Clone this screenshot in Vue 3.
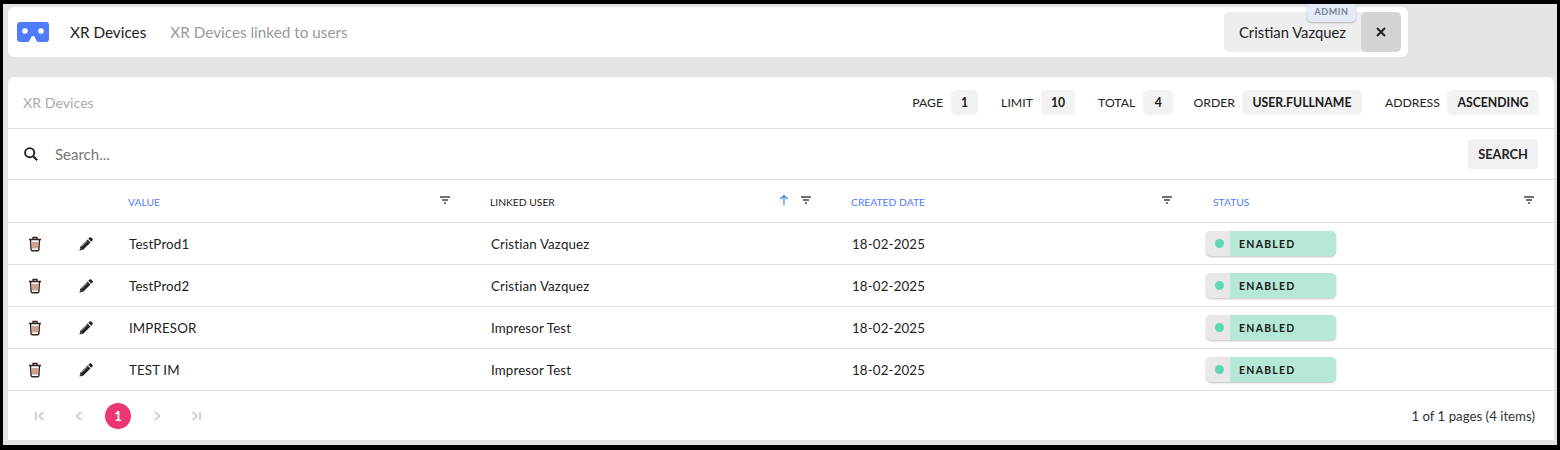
<template>
  <div class="page">
    <header class="topbar">
      <svg class="logo" viewBox="0 0 32 20" width="32" height="20">
        <path fill="#4f7cff" d="M3 0h26a3 3 0 0 1 3 3v14a3 3 0 0 1-3 3h-7.500a2 2 0 0 1-1.800-1.100l-2-4a2 2 0 0 0-3.400 0l-2 4a2 2 0 0 1-1.800 1.100H3a3 3 0 0 1-3-3V3a3 3 0 0 1 3-3z" />
        <circle cx="8" cy="9" r="2.800" fill="#fff" />
        <circle cx="24" cy="9" r="2.800" fill="#fff" />
      </svg>
      <span class="title">XR Devices</span>
      <span class="subtitle">XR Devices linked to users</span>
      <div class="user">
        <span class="role">ADMIN</span>
        <span class="user-name">Cristian Vazquez</span>
        <button class="close">
          <svg viewBox="0 0 12 12" width="12" height="12">
            <path d="M2 2l8 8M10 2l-8 8" stroke="#222" stroke-width="1.900" fill="none" />
          </svg>
        </button>
      </div>
    </header>

    <main class="card">
      <div class="card-head">
        <span class="card-title">XR Devices</span>
        <div class="meta">
          <div v-for="m in meta" :key="m.label" class="meta-item" :class="m.cls">
            <span class="meta-label">{{ m.label }}</span>
            <span class="meta-value">{{ m.value }}</span>
          </div>
        </div>
      </div>

      <div class="search">
        <svg class="search-icon" viewBox="0 0 16 16" width="16" height="16">
          <circle cx="6.700" cy="6.700" r="4.600" stroke="#222" stroke-width="1.900" fill="none" />
          <path d="M10.200 10.200l4 4" stroke="#222" stroke-width="2.100" fill="none" />
        </svg>
        <span class="search-text">Search...</span>
        <button class="search-btn">SEARCH</button>
      </div>

      <div class="row head">
        <div></div>
        <div></div>
        <div v-for="c in columns" :key="c.label" class="th" :class="c.cls">
          <span>{{ c.label }}</span>
          <svg v-if="c.sorted" class="sort" viewBox="0 0 12 12" width="12" height="12">
            <path d="M6 11V2M2.500 5L6 1.500 9.500 5" stroke="#2f80ed" stroke-width="1.200" fill="none" />
          </svg>
          <svg class="filter" viewBox="0 0 12 8" width="12" height="8">
            <path d="M1 1h10M3 4h6M5 7h2" stroke="#444" stroke-width="1.300" fill="none" />
          </svg>
        </div>
      </div>

      <div v-for="r in rows" :key="r.value" class="row body">
        <div class="act">
          <svg viewBox="0 0 14 16" width="14" height="16">
            <path d="M1 3.500h12M5 3.200V1.500h4v1.700" stroke="#33211f" stroke-width="1.300" fill="none" />
            <path d="M2.500 3.500l.6 10a1.300 1.300 0 0 0 1.300 1.200h5.200a1.300 1.300 0 0 0 1.300-1.200l.6-10" stroke="#33211f" stroke-width="1.400" fill="none" />
            <path d="M5 6v6.500M7 6v6.500M9 6v6.500" stroke="#a5523a" stroke-width="1.100" fill="none" />
          </svg>
        </div>
        <div class="act">
          <svg viewBox="0 0 14 14" width="14" height="14">
            <path fill="#222" d="M0.500 13.500l.8-3.700 7.300-7.300 2.900 2.900-7.300 7.300zM9.300 1.800l1.200-1.200a1.200 1.200 0 0 1 1.700 0l1.200 1.200a1.200 1.200 0 0 1 0 1.700l-1.200 1.200z" />
            <path d="M2.400 9.800l5.900-5.900M1.600 11.200l1.200 1.200" stroke="#fff" stroke-width=".6" fill="none" />
          </svg>
        </div>
        <div class="td">{{ r.value }}</div>
        <div class="td">{{ r.user }}</div>
        <div class="td">{{ r.date }}</div>
        <div class="td status">
          <div class="chip">
            <span class="chip-dot"><i></i></span>
            <span class="chip-text">ENABLED</span>
          </div>
        </div>
      </div>

      <footer class="pager">
        <div class="pages">
          <svg viewBox="0 0 12 12" width="12" height="12"><path d="M2 2v8M9.500 2L5 6l4.500 4" class="pg" /></svg>
          <svg viewBox="0 0 12 12" width="12" height="12"><path d="M8 2L3.500 6 8 10" class="pg" /></svg>
          <span class="current">1</span>
          <svg viewBox="0 0 12 12" width="12" height="12"><path d="M4 2l4.500 4L4 10" class="pg" /></svg>
          <svg viewBox="0 0 12 12" width="12" height="12"><path d="M10 2v8M2.500 2L7 6l-4.500 4" class="pg" /></svg>
        </div>
        <span class="count">1 of 1 pages (4 items)</span>
      </footer>
    </main>
  </div>
</template>

<script setup>
const meta = [
  { label: 'PAGE', value: '1', cls: 'm-page' },
  { label: 'LIMIT', value: '10', cls: 'm-limit' },
  { label: 'TOTAL', value: '4', cls: 'm-total' },
  { label: 'ORDER', value: 'USER.FULLNAME', cls: 'm-order' },
  { label: 'ADDRESS', value: 'ASCENDING', cls: 'm-address' }
]

const columns = [
  { label: 'VALUE', cls: 'blue' },
  { label: 'LINKED USER', cls: 'dark', sorted: true },
  { label: 'CREATED DATE', cls: 'blue' },
  { label: 'STATUS', cls: 'blue' }
]

const rows = [
  { value: 'TestProd1', user: 'Cristian Vazquez', date: '18-02-2025' },
  { value: 'TestProd2', user: 'Cristian Vazquez', date: '18-02-2025' },
  { value: 'IMPRESOR', user: 'Impresor Test', date: '18-02-2025' },
  { value: 'TEST IM', user: 'Impresor Test', date: '18-02-2025' }
]
</script>

<style>
html, body {
  margin: 0;
  background: #000;
}
</style>

<style scoped>
.page {
  box-sizing: border-box;
  width: 1560px;
  height: 450px;
  overflow: hidden;
  background: #e4e4e4;
  border-style: solid;
  border-color: #000;
  border-width: 4px 3px 5px 3px;
  padding: 3px 3px 0 5px;
  font-family: Lato, "Liberation Sans", sans-serif;
  color: #222;
}

.topbar {
  position: relative;
  display: flex;
  align-items: center;
  box-sizing: border-box;
  width: 1400px;
  height: 50px;
  padding: 0 7px 0 9px;
  background: #fff;
  border-radius: 6px;
}

.logo {
  margin-right: 21px;
}

.title {
  font-size: 15.300px;
  color: #1c1c1c;
}

.subtitle {
  margin-left: 24px;
  font-size: 15.300px;
  color: #999;
}

.user {
  position: relative;
  display: flex;
  align-items: center;
  margin-left: auto;
  width: 177px;
  height: 40px;
  background: #eee;
  border-radius: 5px;
}

.user-name {
  margin-left: 15px;
  font-size: 14.800px;
  color: #222;
}

.role {
  position: absolute;
  top: -9px;
  left: 83px;
  width: 49px;
  height: 19px;
  line-height: 18px;
  text-align: center;
  font-size: 9px;
  font-weight: 700;
  letter-spacing: 0.6px;
  color: #7c8295;
  background: #e6ebfa;
  border-radius: 0 0 5px 5px;
  box-shadow: 0 1px 2px rgba(0, 0, 0, 0.25);
}

.close {
  display: flex;
  align-items: center;
  justify-content: center;
  margin-left: auto;
  width: 40px;
  height: 40px;
  padding: 0;
  border: 0;
  background: #d4d4d4;
  border-radius: 5px;
}

.card {
  margin-top: 20px;
  height: 363px;
  background: #fff;
  border-radius: 6px 6px 0 0;
}

.card-head {
  display: flex;
  align-items: center;
  justify-content: space-between;
  box-sizing: border-box;
  height: 52px;
  padding: 0 15px 0 15px;
  border-bottom: 1px solid #e0e0e0;
}

.card-title {
  font-size: 14.200px;
  color: #aaa;
  margin-bottom: 1px;
}

.meta {
  display: flex;
  align-items: center;
}

.meta-item {
  display: flex;
  align-items: center;
  gap: 8px;
}

.m-limit,
.m-total {
  margin-left: 23px;
}

.m-order {
  margin-left: 20px;
  gap: 7px;
}

.m-address {
  margin-left: 23px;
  gap: 7px;
}

.meta-label {
  font-size: 12.250px;
  color: #222;
}

.meta-value {
  box-sizing: border-box;
  height: 25px;
  line-height: 25px;
  min-width: 27px;
  padding: 0 10px;
  font-size: 12.250px;
  font-weight: 700;
  text-align: center;
  color: #1a1a1a;
  background: #f2f2f2;
  border-radius: 5px;
}

.m-total .meta-value {
  padding: 0 11.500px;
}

.m-order .meta-value,
.m-address .meta-value {
  padding: 0 10.500px;
}

.search {
  display: flex;
  align-items: center;
  box-sizing: border-box;
  height: 51px;
  padding: 0 15px;
  border-bottom: 1px solid #e0e0e0;
}

.search-text {
  margin-left: 16px;
  font-size: 15px;
  color: #777;
}

.search-btn {
  margin-left: auto;
  margin-right: 1px;
  width: 70px;
  height: 30px;
  padding: 0;
  border: 0;
  font-family: inherit;
  font-size: 12.800px;
  font-weight: 700;
  color: #222;
  background: #f0f0f0;
  border-radius: 4px;
}

.row {
  display: grid;
  grid-template-columns: 51px 51px 362px 361px 361px 1fr;
  align-items: center;
  box-sizing: border-box;
  border-bottom: 1px solid #e0e0e0;
}

.head {
  height: 43px;
}

.body {
  height: 42px;
}

.th {
  position: relative;
  display: flex;
  align-items: center;
  padding-top: 2px;
  padding-left: 18px;
  font-size: 10.300px;
}

.th:last-child {
  padding-left: 19px;
}

.blue {
  color: #4f7cff;
}

.dark {
  color: #222;
}

.sort {
  position: absolute;
  right: 43px;
  top: 0;
}

.filter {
  position: absolute;
  right: 21px;
  top: 2px;
}

.th:last-child .filter {
  right: 19px;
}

.act {
  display: flex;
  justify-content: center;
  padding-left: 2px;
}

.td {
  padding-left: 19px;
  font-size: 13.300px;
  letter-spacing: 0.15px;
  color: #222;
}

.status {
  padding-left: 12px;
}

.chip {
  display: flex;
  width: 130px;
  height: 25px;
  border-radius: 5px;
  overflow: hidden;
  background: #b5e8d7;
  box-shadow: 0 1px 2px rgba(0, 0, 0, 0.25);
}

.chip-dot {
  display: flex;
  align-items: center;
  justify-content: center;
  width: 24px;
  background: #e8e8e8;
}

.chip-dot i {
  display: block;
  width: 9px;
  height: 9px;
  margin-left: 2px;
  border-radius: 50%;
  background: #5fd9b5;
}

.chip-text {
  margin-left: 9px;
  line-height: 26px;
  font-size: 10.500px;
  font-weight: 700;
  letter-spacing: 1.250px;
  color: #1a1a1a;
}

.pager {
  display: flex;
  align-items: center;
  justify-content: space-between;
  height: 49px;
  padding: 0 19px 0 26px;
}

.pages {
  display: flex;
  align-items: center;
}

.pages svg {
  margin: 0 0 0 27px;
}

.pages svg:first-child {
  margin-left: 0;
}

.pages .current + svg {
  margin-left: 20px;
}

.pg {
  fill: none;
  stroke: #c4c4c4;
  stroke-width: 1.500;
}

.current {
  display: block;
  margin-left: 20px;
  width: 26px;
  height: 26px;
  line-height: 26px;
  text-align: center;
  font-size: 13px;
  font-weight: 700;
  color: #fff;
  background: #ec3573;
  border-radius: 50%;
}

.count {
  font-size: 13.250px;
  color: #333;
}
</style>
